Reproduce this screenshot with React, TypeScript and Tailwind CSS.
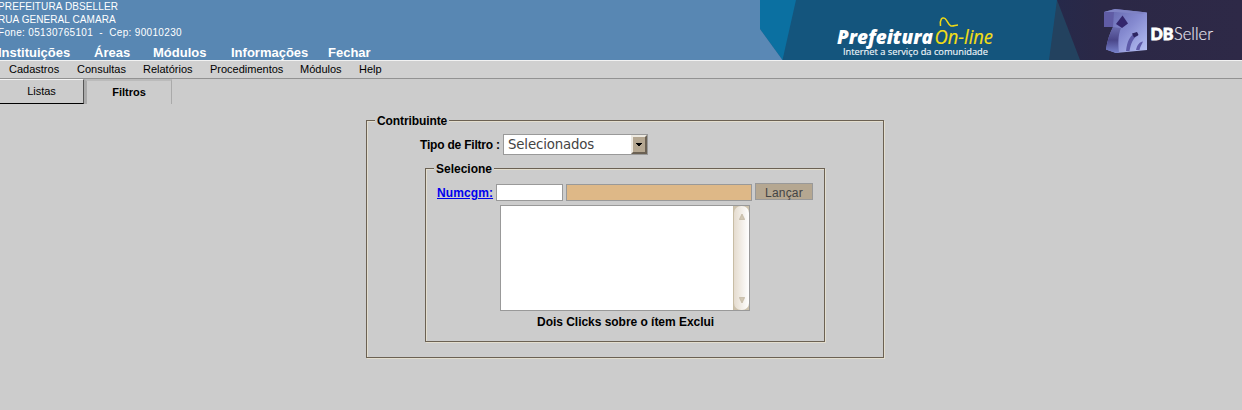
import React from "react";

const areas = [
  { label: "Instituições", cls: "w-[96px]" },
  { label: "Áreas", cls: "w-[59px]" },
  { label: "Módulos", cls: "w-[78px]" },
  { label: "Informações", cls: "w-[97px]" },
  { label: "Fechar", cls: "w-[60px]" },
];

const menu = [
  { label: "Cadastros", cls: "w-[68px]" },
  { label: "Consultas", cls: "w-[66px]" },
  { label: "Relatórios", cls: "w-[67px]" },
  { label: "Procedimentos", cls: "w-[90px]" },
  { label: "Módulos", cls: "w-[59px]" },
  { label: "Help", cls: "w-[40px]" },
];

function Banner() {
  return (
    <svg width="482" height="60" viewBox="0 0 482 60" className="block shrink-0">
      <defs>
        <linearGradient id="cube" x1="0" y1="0" x2="1" y2="1">
          <stop offset="0" stopColor="#5f62a8" />
          <stop offset="0.5" stopColor="#858ad0" />
          <stop offset="1" stopColor="#b9c3f5" />
        </linearGradient>
        <linearGradient id="arm" x1="0" y1="0" x2="0" y2="1">
          <stop offset="0" stopColor="#6a6caf" />
          <stop offset="0.5" stopColor="#4a4689" />
          <stop offset="1" stopColor="#7782cc" />
        </linearGradient>
        <linearGradient id="night" x1="0" y1="0" x2="1" y2="0">
          <stop offset="0" stopColor="#26294a" />
          <stop offset="0.25" stopColor="#2b2846" />
          <stop offset="1" stopColor="#2e2947" />
        </linearGradient>
      </defs>
      <rect width="482" height="60" fill="#14557d" />
      <path d="M0 0H36L22.500 60L0 29Z" fill="#0b70a1" />
      <path d="M0 29L22.500 60H0Z" fill="#5a88b5" />
      <path d="M297 0H482V60H289Z" fill="#23425f" />
      <path d="M297 0H482V60H320Z" fill="url(#night)" />
      <g fontFamily="'Open Sans', 'Noto Sans', sans-serif">
        <text x="77" y="43.500" fontSize="20" fontWeight="800" fontStyle="italic" fill="#fff" textLength="96" lengthAdjust="spacingAndGlyphs">Prefeitura</text>
        <text x="174.500" y="43.500" fontSize="20.500" fontStyle="italic" fill="#f3df16" stroke="#f3df16" strokeWidth="0.200" textLength="58.500" lengthAdjust="spacingAndGlyphs">On-line</text>
        <text x="83" y="54.500" fontSize="9.500" fill="#f0f6fa" stroke="#f0f6fa" strokeWidth="0.150" textLength="145" lengthAdjust="spacingAndGlyphs">Internet a serviço da comunidade</text>
      </g>
      <path d="M180.500 26C179.500 20 182 16.500 185 18.500C188 21 188 25 191 26C193.500 26.600 195.500 25 198 25" fill="none" stroke="#f0d814" strokeWidth="1.500" />
      <path d="M344 12L355 9L387 12.500L387 50L356 53L346 49.500C347 41 350 33 353 27L344 27Z" fill="url(#cube)" />
      <path d="M344 12L354 10.500L353 27L344 27Z" fill="#605ca5" />
      <path d="M344 12L355 9L387 12.500L381 14L355 12Z" fill="#7f83c4" />
      <path d="M353 27L361 28C358 35 358 43 359 52.500L356 53L346 49.500C347 41 350 33 353 27Z" fill="url(#arm)" />
      <path d="M362.500 15.500L368 23.500L362 28L356 24Z" fill="#34266d" />
      <path d="M366 51C367 42 370 34 377 32.500L378 35.500C373 38 371 43 369.500 51Z" fill="#5d5aa8" />
      <path d="M372 33.500L377 32L378.500 35L374 37.500Z" fill="#2d2561" />
      <path d="M376 50C377 45 380 41.500 383 41.500C382 44 380 47 379.500 50Z" fill="#5f5aa8" />
      <g fontFamily="Lato, sans-serif" fontSize="17" fill="#fff">
        <text x="390.500" y="39.500" fontWeight="900" stroke="#fff" strokeWidth="0.800" textLength="23" lengthAdjust="spacingAndGlyphs">DB</text>
        <text x="414" y="39.500" fontWeight="300" fill="#e8e6ef" stroke="#e8e6ef" strokeWidth="0.150" textLength="39" lengthAdjust="spacingAndGlyphs">Seller</text>
      </g>
    </svg>
  );
}

export default function App() {
  const groove =
    "border border-[#6b6153] shadow-[1px_1px_0_#e3decf,inset_1px_1px_0_#e3decf]";
  return (
    <div className="h-[410px] w-[1242px] overflow-hidden bg-[#ccc] font-['Liberation_Sans',Arial,sans-serif] text-black">
      <header className="flex h-[60px] justify-between bg-[#5887b3] text-white">
        <div className="-ml-[2px] whitespace-nowrap">
          <div className="h-[45px] text-[10px] leading-[13px]">
            <div className="w-[200px] tracking-[0.12px]">PREFEITURA DBSELLER</div>
            <div className="w-[200px] tracking-[0.08px]">RUA GENERAL CAMARA</div>
            <div className="w-[220px] whitespace-pre tracking-[0.33px]">{"Fone: 05130765101  -  Cep: 90010230"}</div>
          </div>
          <nav className="flex text-[13px] leading-[15px] font-bold">
            {areas.map((a) => (
              <a key={a.label} className={a.cls}>{a.label}</a>
            ))}
          </nav>
        </div>
        <Banner />
      </header>
      <nav className="flex h-[19px] border-t border-b border-t-[#f2f2f2] border-b-[#929292] bg-[#d0d0d0] pl-[9px] text-[11px] leading-[17px] whitespace-nowrap">
        {menu.map((m) => (
          <a key={m.label} className={m.cls}>{m.label}</a>
        ))}
      </nav>
      <div className="flex h-[25px] text-[11px]">
        <div className="h-[25px] w-[84px] border-t border-r border-b border-t-[#f4f4f4] border-r-[#555] border-b-black text-center leading-[23px]">Listas</div>
        <div className="h-[25px] w-[88px] border-t-2 border-r border-l-[3px] border-t-[#bbb] border-r-[#aaa] border-l-[#aaa] text-center leading-[23px] font-bold">Filtros</div>
      </div>
      <main className="pt-[16px] pl-[366px] text-[12px] font-bold">
        <section className={`h-[238px] w-[518px] ${groove}`}>
          <h2 className="-mt-[7px] ml-[8px] h-[14px] w-[74px] bg-[#ccc] pl-[2px] leading-[14px] tracking-[-0.1px] whitespace-nowrap">Contribuinte</h2>
          <div className="mt-[6px] ml-[53px] flex h-[21px] items-center">
            <label className="w-[83px] tracking-[-0.2px] whitespace-nowrap">Tipo de Filtro :</label>
            <div className="flex h-[21px] w-[145px] border border-[#999] bg-white">
              <span className="flex-1 pl-[4px] font-['DejaVu_Sans',sans-serif] text-[13.333px] leading-[20px] font-normal tracking-[-0.15px] text-[#444]">Selecionados</span>
              <span className="flex h-[19px] w-[16px] items-center justify-center border-2 border-t-[#ede9e1] border-r-[#6b6153] border-b-[#6b6153] border-l-[#ede9e1] bg-[#b5a791]">
                <svg width="6" height="3" viewBox="0 0 6 3"><path d="M0 0H6V1H5V2H4V3H2V2H1V1H0Z" fill="#000" /></svg>
              </span>
            </div>
          </div>
          <section className={`mt-[13px] ml-[58px] h-[174px] w-[400px] ${groove}`}>
            <h3 className="-mt-[7px] ml-[8px] h-[14px] w-[60px] bg-[#ccc] pl-[2px] leading-[14px]">Selecione</h3>
            <div className="mt-[7px] ml-[11px] flex h-[18px]">
              <a className="w-[59px] leading-[20px] tracking-[0.1px] text-[#0000ee] underline">Numcgm:</a>
              <div className="mt-px h-[17px] w-[67px] border border-[#999] bg-white" />
              <div className="mt-px ml-[3px] h-[17px] w-[186px] border border-[#999] bg-[#deb887]" />
              <button className="ml-[3px] h-[17px] w-[58px] border border-[#999] bg-[#b5a791] text-[12px] leading-[18px] font-normal tracking-[0.2px] text-[#444]">Lançar</button>
            </div>
            <div className="mt-[4px] ml-[74px] flex h-[106px] w-[250px] justify-end border border-[#999] bg-white">
              <div className="w-[16px] border-l border-[#c8bda5] bg-[#cdc2ad]">
                <div className="flex h-[104px] w-[15px] flex-col items-center justify-between rounded-[7px] bg-linear-to-r from-[#e5dccf] to-white pt-[8px] pb-[7px]">
                  <svg width="6" height="6" viewBox="0 0 6 6"><path d="M3 0L5.700 5.500H0.300Z" fill="#d1c7b4" stroke="#bbae97" strokeWidth="0.600" /></svg>
                  <svg width="6" height="6" viewBox="0 0 6 6"><path d="M3 6L5.700 0.500H0.300Z" fill="#d1c7b4" stroke="#bbae97" strokeWidth="0.600" /></svg>
                </div>
              </div>
            </div>
            <p className="mt-[4px] ml-[111px] leading-[14px] tracking-[-0.03px]">Dois Clicks sobre o ítem Exclui</p>
          </section>
        </section>
      </main>
    </div>
  );
}
